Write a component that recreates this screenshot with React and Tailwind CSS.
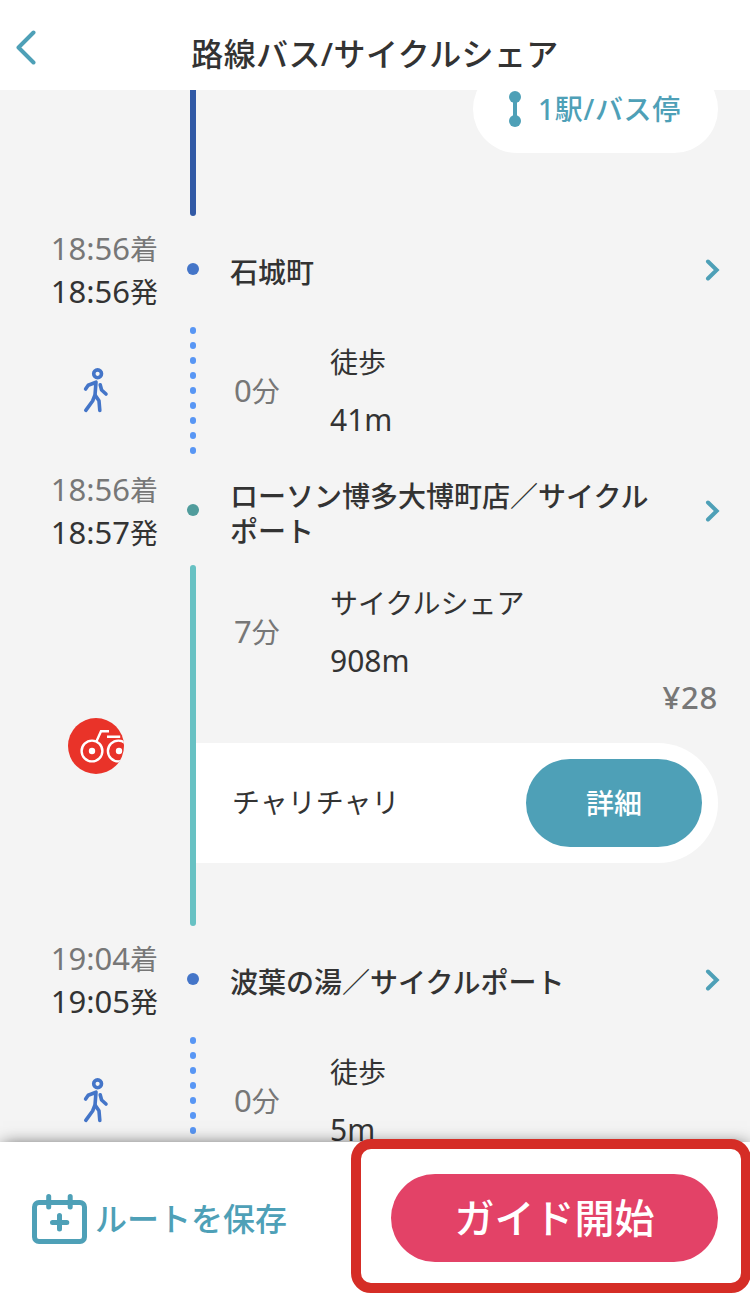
import React from 'react';

const WalkIcon = () => (
    <svg width="26" height="46" viewBox="0 0 26 46" fill="none" stroke="#4475c8" strokeWidth="3.6" strokeLinecap="round" strokeLinejoin="round">
        <circle cx="14.6" cy="5.8" r="3.9" />
        <path d="M2.6 21 L5.2 17.2 L13 14.2 L12 27 L9.6 33 L2.8 42.4" />
        <path d="M12.2 27.4 L16 32.8 L16.8 42.4" />
        <path d="M17.2 16.8 L18.6 22 L23 26" />
    </svg>
);

const BikeIcon = () => (
    <svg width="56" height="56" viewBox="0 0 56 56" fill="none">
        <defs>
            <clipPath id="badge">
                <circle cx="28" cy="28" r="28" />
            </clipPath>
        </defs>
        <g clipPath="url(#badge)" stroke="#fff" strokeWidth="2.4">
            <rect width="56" height="56" fill="#e93329" stroke="none" />
            <circle cx="24" cy="33" r="10.4" />
            <circle cx="50.3" cy="33" r="10.4" />
            <circle cx="24" cy="33" r="3.2" fill="#fff" stroke="none" />
            <circle cx="51" cy="33" r="3.2" fill="#fff" stroke="none" />
            <path d="M28.5 23.2 L33 13.2 H41" />
            <path d="M39 18.8 H52.2" />
        </g>
    </svg>
);

const CalendarPlusIcon = () => (
    <svg width="55" height="50" viewBox="0 0 55 50" fill="none" stroke="#4ea0b7" strokeLinecap="round">
        <rect x="2.5" y="8.5" width="50" height="39" rx="4.5" strokeWidth="5" />
        <path d="M16.7 2.5 V13 M38.2 2.5 V13 M27.5 21.5 V35 M20.5 28.5 H34.8" strokeWidth="5" />
    </svg>
);

const StopsIcon = () => (
    <svg width="12" height="36" viewBox="0 0 12 36" fill="#4ea0b7">
        <circle cx="6" cy="6" r="6" />
        <circle cx="6" cy="30" r="6" />
        <rect x="4" y="6" width="4" height="24" />
    </svg>
);

const ChevronLink = () => (
    <svg className="ml-auto mr-[30px] shrink-0" width="15" height="22" viewBox="0 0 15 22" fill="none" stroke="#4ea0b7" strokeWidth="4" strokeLinecap="round">
        <path d="M3 2.5 L11.7 11 L3 19.5" />
    </svg>
);

const Dots = ({ count }) => (
    <div className="flex w-1.5 flex-col items-center gap-2 pt-[3px]">
        {Array.from({ length: count }, (_, i) => (
            <span key={i} className="h-[7px] w-1.5 shrink-0 rounded-full bg-[#5896f4]" />
        ))}
    </div>
);

const Stop = ({ arrive, depart, name, dot }) => (
    <div className="flex h-[108px] shrink-0 items-center">
        <div className="w-[190px] pr-[32px] text-right text-[28px] leading-[42px]">
            <p className="text-[#777]"><span className="text-[31px]">{arrive}</span>着</p>
            <p><span className="text-[31px]">{depart}</span>発</p>
        </div>
        <span className={`-mx-[3px] mb-[2px] size-3 shrink-0 rounded-full ${dot}`} />
        <p className="ml-[34px] mt-[5px] w-[424px] text-[28px] font-medium leading-[35px]">{name}</p>
        <ChevronLink />
    </div>
);

const Leg = ({ minutes, mode, distance }) => (
    <div className="flex h-[133px] shrink-0 items-center pl-[38px] text-[28px]">
        <p className="w-[96px] text-[#777]"><span className="text-[31px]">{minutes}</span>分</p>
        <div className="leading-[57px]">
            <p>{mode}</p>
            <p className="text-[30px]">{distance}</p>
        </div>
    </div>
);

const WalkSection = ({ distance }) => (
    <div className="flex h-[133px] shrink-0">
        <div className="flex w-[190px] items-center justify-center pl-[2px]">
            <WalkIcon />
        </div>
        <Dots count={9} />
        <Leg minutes="0" mode="徒歩" distance={distance} />
    </div>
);

const App = () => {
    return (
        <div className="relative flex h-[1294px] w-[750px] flex-col overflow-hidden bg-[#f4f4f4] font-['Noto_Sans','Noto_Sans_CJK_JP',sans-serif] text-[#333]">
            <header className="z-10 flex h-[90px] shrink-0 items-center bg-white px-4">
                <svg className="mt-[5px]" width="20" height="36" viewBox="0 0 20 36" fill="none" stroke="#4ea0b7" strokeWidth="4" strokeLinecap="round" strokeLinejoin="round">
                    <path d="M17.5 2.5 L2.5 17.5 L17.5 32.5" />
                </svg>
                <h1 className="mr-5 mt-[17px] flex-1 text-center text-[32px] font-medium tracking-[0.4px]">路線バス/サイクルシェア</h1>
            </header>

            <main className="flex min-h-0 flex-1 flex-col overflow-hidden">
                <div className="flex h-[126px] shrink-0 justify-between pl-[190px] pr-8">
                    <div className="w-1.5 rounded-b-full bg-[#3159a5]" />
                    <button className="-mt-[25px] flex h-[88px] w-[245px] items-center rounded-full bg-white pl-9 text-[28px] font-medium text-[#4ea0b7]">
                        <StopsIcon />
                        <span className="ml-[17px] tracking-[0.7px]">1駅/バス停</span>
                    </button>
                </div>

                <Stop arrive="18:56" depart="18:56" name="石城町" dot="bg-[#4475c8]" />
                <WalkSection distance="41m" />
                <Stop arrive="18:56" depart="18:57" name="ローソン博多大博町店／サイクルポート" dot="bg-[#509c9c]" />

                <div className="flex h-[361px] shrink-0">
                    <div className="flex w-[190px] items-center justify-center pl-[2px]">
                        <BikeIcon />
                    </div>
                    <div className="w-1.5 rounded-full bg-[#67c1c3]" />
                    <div className="flex flex-1 flex-col pr-8">
                        <Leg minutes="7" mode="サイクルシェア" distance="908m" />
                        <p className="-mt-[19px] h-16 text-right text-[31px] font-medium leading-[36px] tracking-[0.8px] text-[#777]">¥28</p>
                        <div className="flex h-[120px] shrink-0 items-center justify-between rounded-r-full bg-white pl-9 pr-4">
                            <span className="mb-[3px] text-[28px]">チャリチャリ</span>
                            <button className="h-[88px] w-[176px] rounded-full bg-[#4ea0b7] text-[28px] font-medium text-white">詳細</button>
                        </div>
                    </div>
                </div>

                <Stop arrive="19:04" depart="19:05" name="波葉の湯／サイクルポート" dot="bg-[#4475c8]" />
                <WalkSection distance="5m" />
            </main>

            <footer className="z-10 flex h-[152px] shrink-0 items-center justify-between bg-white px-8 shadow-[0_0_16px_-3px_rgba(0,0,0,0.7)]">
                <button className="flex items-center gap-[8px] pt-[2px] text-[32px] font-medium text-[#4ea0b7]">
                    <CalendarPlusIcon />
                    ルートを保存
                </button>
                <button className="h-[88px] w-[327px] rounded-full bg-[#e34267] text-[40px] font-medium text-white">ガイド開始</button>
            </footer>

            {/* callout frame over the start button */}
            <div className="pointer-events-none absolute left-[351px] top-[1139px] z-20 h-[154px] w-[400px] rounded-[20px] border-10 border-[#d52d26]" />
        </div>
    );
};

export default App;
